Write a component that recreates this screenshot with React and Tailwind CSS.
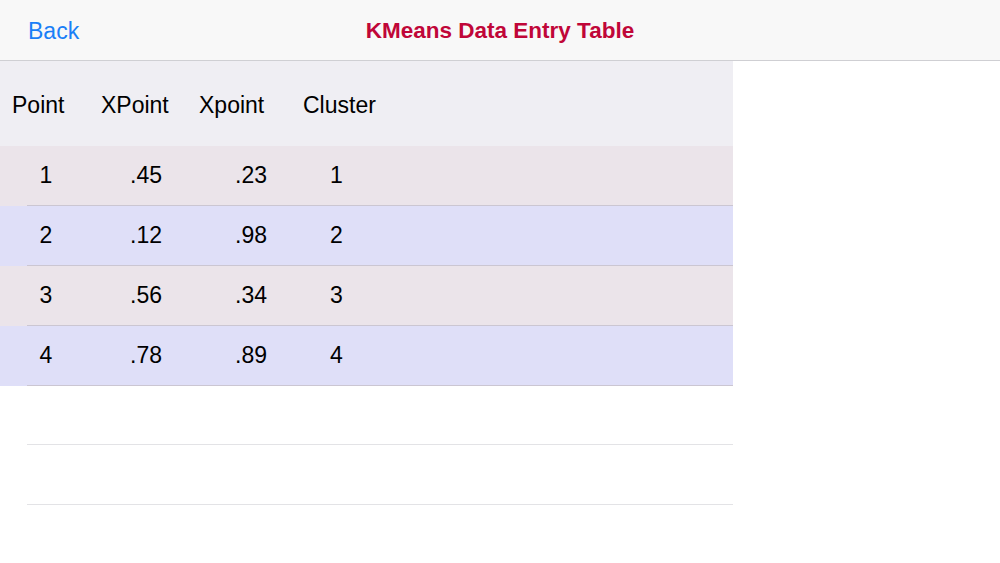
import React from 'react';

const rows = [
  { p: '1', x: '.45', y: '.23', c: '1', bg: 'bg-[#ebe4ea]' },
  { p: '2', x: '.12', y: '.98', c: '2', bg: 'bg-[#dfdff8]' },
  { p: '3', x: '.56', y: '.34', c: '3', bg: 'bg-[#ebe4ea]' },
  { p: '4', x: '.78', y: '.89', c: '4', bg: 'bg-[#dfdff8]' },
];

export default function App() {
  return (
    <div className="w-[1000px] h-[563px] bg-white overflow-hidden font-['Liberation_Sans',Arial,sans-serif] text-[23px] text-black">
      {/* nav bar */}
      <header className="h-[61px] bg-[#f8f8f8] border-b border-[#cfcfd3] flex items-center relative pt-[2px]">
        <span className="ml-[28px] text-[#1a7ff7]">Back</span>
        <h1 className="absolute left-0 right-0 text-center font-semibold text-[22.5px] text-[#c00638] pointer-events-none">
          KMeans Data Entry Table
        </h1>
      </header>

      {/* table */}
      <div className="w-[733px]">
        <div className="h-[85px] bg-[#efeef3] flex items-center pt-[4px]">
          <span className="ml-[12px] w-[89px]">Point</span>
          <span className="w-[98px]">XPoint</span>
          <span className="w-[104px]">Xpoint</span>
          <span>Cluster</span>
        </div>

        {rows.map((r) => (
          <div key={r.p} className={`h-[60px] flex flex-col ${r.bg}`}>
            <div className="flex-1 flex items-center">
              <span className="w-[92px] text-center">{r.p}</span>
              <span className="w-[100px] pl-[38px]">{r.x}</span>
              <span className="w-[75px] text-right">{r.y}</span>
              <span className="pl-[63px]">{r.c}</span>
            </div>
            <div className="ml-[27px] h-px bg-[#cbc6d2]" />
          </div>
        ))}

        <div className="h-[59px] flex flex-col">
          <div className="flex-1" />
          <div className="ml-[27px] h-px bg-[#e3e3e6]" />
        </div>
        <div className="h-[60px] flex flex-col">
          <div className="flex-1" />
          <div className="ml-[27px] h-px bg-[#e3e3e6]" />
        </div>
      </div>
    </div>
  );
}
